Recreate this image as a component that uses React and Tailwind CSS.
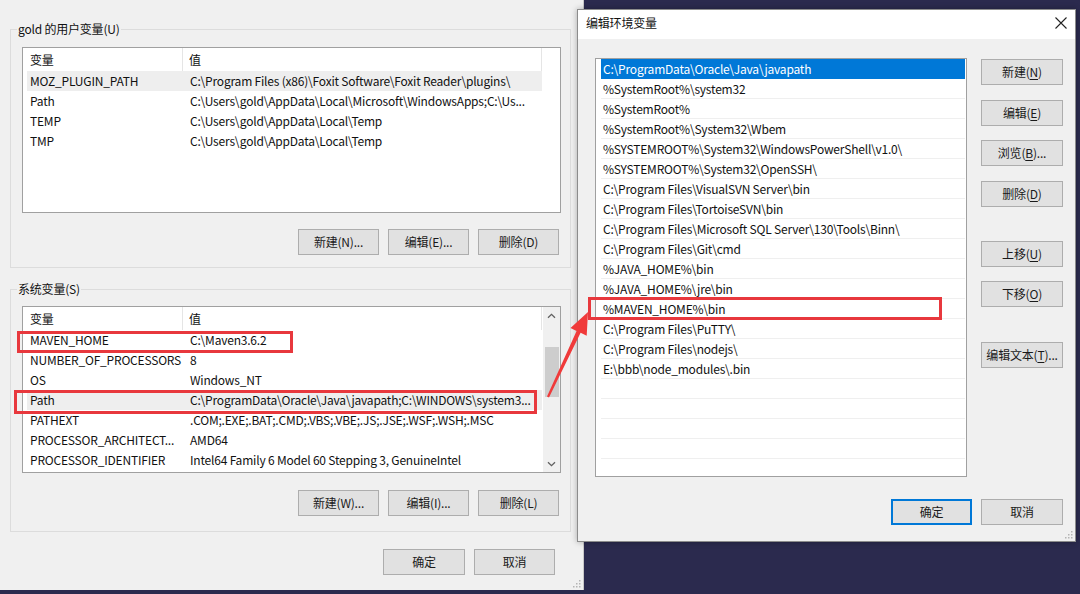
import React from 'react';

const userVars = [
  { name: 'MOZ_PLUGIN_PATH', value: 'C:\\Program Files (x86)\\Foxit Software\\Foxit Reader\\plugins\\', shade: true },
  { name: 'Path', value: 'C:\\Users\\gold\\AppData\\Local\\Microsoft\\WindowsApps;C:\\Us...' },
  { name: 'TEMP', value: 'C:\\Users\\gold\\AppData\\Local\\Temp' },
  { name: 'TMP', value: 'C:\\Users\\gold\\AppData\\Local\\Temp' },
];

const sysVars = [
  { name: 'MAVEN_HOME', value: 'C:\\Maven3.6.2' },
  { name: 'NUMBER_OF_PROCESSORS', value: '8' },
  { name: 'OS', value: 'Windows_NT' },
  { name: 'Path', value: 'C:\\ProgramData\\Oracle\\Java\\javapath;C:\\WINDOWS\\system3...', shade: true },
  { name: 'PATHEXT', value: '.COM;.EXE;.BAT;.CMD;.VBS;.VBE;.JS;.JSE;.WSF;.WSH;.MSC' },
  { name: 'PROCESSOR_ARCHITECT...', value: 'AMD64' },
  { name: 'PROCESSOR_IDENTIFIER', value: 'Intel64 Family 6 Model 60 Stepping 3, GenuineIntel' },
];

const pathItems = [
  'C:\\ProgramData\\Oracle\\Java\\javapath',
  '%SystemRoot%\\system32',
  '%SystemRoot%',
  '%SystemRoot%\\System32\\Wbem',
  '%SYSTEMROOT%\\System32\\WindowsPowerShell\\v1.0\\',
  '%SYSTEMROOT%\\System32\\OpenSSH\\',
  'C:\\Program Files\\VisualSVN Server\\bin',
  'C:\\Program Files\\TortoiseSVN\\bin',
  'C:\\Program Files\\Microsoft SQL Server\\130\\Tools\\Binn\\',
  'C:\\Program Files\\Git\\cmd',
  '%JAVA_HOME%\\bin',
  '%JAVA_HOME%\\jre\\bin',
  '%MAVEN_HOME%\\bin',
  'C:\\Program Files\\PuTTY\\',
  'C:\\Program Files\\nodejs\\',
  'E:\\bbb\\node_modules\\.bin',
  '', '', '', '', '', '',
];

const Btn = ({ children, className = '', primary }) => (
  <button
    className={`h-[26px] shrink-0 bg-[#e1e1e1] text-[12px] text-[#1a1a1a] ${
      primary ? 'border-2 border-[#0078d7]' : 'border border-[#adadad]'
    } ${className}`}
  >
    {children}
  </button>
);

const Key = ({ k }) => <span className="underline underline-offset-2">{k}</span>;

const Chevron = ({ down }) => (
  <svg width="9" height="6" viewBox="0 0 9 6">
    <path
      d={down ? 'M1 1.2 L4.5 4.7 L8 1.2' : 'M1 4.8 L4.5 1.3 L8 4.8'}
      fill="none"
      stroke="#606060"
      strokeWidth="1.3"
    />
  </svg>
);

const Scrollbar = () => (
  <div className="w-[17px] h-full bg-[#f0f0f0] flex flex-col items-center shrink-0">
    <div className="h-[17px] flex items-center justify-center">
      <Chevron />
    </div>
    <div className="mt-[23px] w-[14px] h-[50px] bg-[#cdcdcd]" />
    <div className="flex-1" />
    <div className="h-[17px] flex items-center justify-center">
      <Chevron down />
    </div>
  </div>
);

const VarList = ({ rows, height, scroll, className = '' }) => (
  <div className={`w-[539px] ${height} border border-[#a0a0a0] bg-white flex overflow-hidden ${className}`}>
    <div className="flex-1 min-w-0 flex flex-col">
      <div className="flex h-[23px] shrink-0">
        <div className="w-[160px] pl-[7px] flex items-center border-r border-[#e5e5e5]">变量</div>
        <div className="w-[359px] pl-[6px] flex items-center border-r border-[#e5e5e5]">值</div>
      </div>
      {rows.map((r) => (
        <div
          key={r.name}
          className={`ml-[4px] w-[515px] h-[20px] shrink-0 flex items-center ${r.shade ? 'bg-[#eeeeee]' : ''}`}
        >
          <div className="w-[156px] pl-[3px] whitespace-nowrap overflow-hidden">{r.name}</div>
          <div className="flex-1 pl-[7px] whitespace-nowrap overflow-hidden">{r.value}</div>
        </div>
      ))}
    </div>
    {scroll && <Scrollbar />}
  </div>
);

const Grip = () => (
  <svg className="absolute right-[2px] bottom-[2px]" width="10" height="10" viewBox="0 0 10 10">
    {[[8, 2], [8, 5], [8, 8], [5, 5], [5, 8], [2, 8]].map(([x, y]) => (
      <rect key={`${x}-${y}`} x={x} y={y} width="1.5" height="1.5" fill="#b4b4b4" />
    ))}
  </svg>
);

export default function App() {
  return (
    <div className="relative w-[1080px] h-[594px] overflow-hidden bg-[#2b2a4e] text-[12px] tracking-[-0.2px] text-[#111] font-['Noto_Sans_CJK_SC',sans-serif]">
      {/* environment variables window */}
      <div className="absolute left-0 top-0 w-[584px] h-[590px] bg-[#f0f0f0] border-r border-[#c8c8c8] pt-[21px] pl-[10px] flex flex-col">
        <fieldset className="w-[561px] h-[247px] border border-[#dcdcdc] pl-[11px] pr-[9px]">
          <legend className="-ml-[5px] px-[1px] leading-[16px]">gold 的用户变量(U)</legend>
          <VarList rows={userVars} height="h-[166px]" className="mt-[10px]" />
          <div className="flex justify-end gap-[9px] mt-[16px] pr-[2px]">
            <Btn className="w-[81px]">新建(N)...</Btn>
            <Btn className="w-[81px]">编辑(E)...</Btn>
            <Btn className="w-[81px]">删除(D)</Btn>
          </div>
        </fieldset>

        <fieldset className="mt-[13px] w-[561px] h-[251px] border border-[#dcdcdc] pl-[11px] pr-[9px]">
          <legend className="-ml-[5px] px-[1px] leading-[16px]">系统变量(S)</legend>
          <VarList rows={sysVars} height="h-[167px]" scroll className="mt-[9px]" />
          <div className="flex justify-end gap-[9px] mt-[17px] pr-[2px]">
            <Btn className="w-[81px]">新建(W)...</Btn>
            <Btn className="w-[81px]">编辑(I)...</Btn>
            <Btn className="w-[81px]">删除(L)</Btn>
          </div>
        </fieldset>

        <div className="flex justify-end gap-[9px] mt-[17px] pr-[28px]">
          <Btn className="w-[82px]">确定</Btn>
          <Btn className="w-[81px]">取消</Btn>
        </div>
        <Grip />
      </div>

      {/* edit environment variable window */}
      <div className="absolute left-[577px] top-[9px] w-[499px] h-[533px] border border-[#8c8c8c] bg-[#f0f0f0] flex flex-col shadow-[0_0_6px_rgba(0,0,0,0.3)]">
        <div className="h-[29px] bg-white flex items-center justify-between pl-[8px] pr-[8px] pb-[4px] shrink-0">
          <span>编辑环境变量</span>
          <svg width="12" height="12" viewBox="0 0 12 12">
            <path d="M0.5 0.5 L11.5 11.5 M11.5 0.5 L0.5 11.5" stroke="#222" strokeWidth="1.1" />
          </svg>
        </div>
        <div className="flex pl-[17px] pt-[19px]">
          <div className="w-[372px] h-[419px] border border-[#a0a0a0] bg-white pl-[5px] pr-[1px] overflow-hidden">
            {pathItems.map((p, i) => (
              <div
                key={i}
                className={`h-[20px] flex items-center pl-[2px] border-b whitespace-nowrap ${
                  i === 0 ? 'bg-[#0078d7] text-white border-[#0078d7]' : 'border-[#efefef]'
                }`}
              >
                {p}
              </div>
            ))}
          </div>
          <div className="ml-[14px] mt-[1px] flex flex-col">
            <Btn className="w-[82px]">新建(<Key k="N" />)</Btn>
            <Btn className="w-[82px] mt-[15px]">编辑(<Key k="E" />)</Btn>
            <Btn className="w-[82px] mt-[14px]">浏览(<Key k="B" />)...</Btn>
            <Btn className="w-[82px] mt-[15px]">删除(<Key k="D" />)</Btn>
            <Btn className="w-[82px] mt-[34px]">上移(<Key k="U" />)</Btn>
            <Btn className="w-[82px] mt-[14px]">下移(<Key k="O" />)</Btn>
            <Btn className="w-[82px] mt-[35px]">编辑文本(<Key k="T" />)...</Btn>
          </div>
        </div>
        <div className="flex justify-end gap-[9px] mt-[22px] pr-[12px]">
          <Btn primary className="w-[81px]">确定</Btn>
          <Btn className="w-[82px]">取消</Btn>
        </div>
        <Grip />
      </div>

      {/* annotations */}
      <div className="absolute left-[17px] top-[331px] w-[276px] h-[22px] border-[3px] border-[#e8383d]" />
      <div className="absolute left-[14px] top-[390px] w-[523px] h-[24px] border-[3px] border-[#e8383d]" />
      <div className="absolute left-[588px] top-[297px] w-[354px] h-[23px] border-[3px] border-[#e8383d]" />
      <svg className="absolute left-0 top-0" width="1080" height="594" viewBox="0 0 1080 594">
        <polygon
          points="547,396.6 576.6,330.9 570.5,328.1 588,312 586.7,335.7 580.6,332.8 549,397.4"
          fill="#f03a3a"
        />
      </svg>
    </div>
  );
}
